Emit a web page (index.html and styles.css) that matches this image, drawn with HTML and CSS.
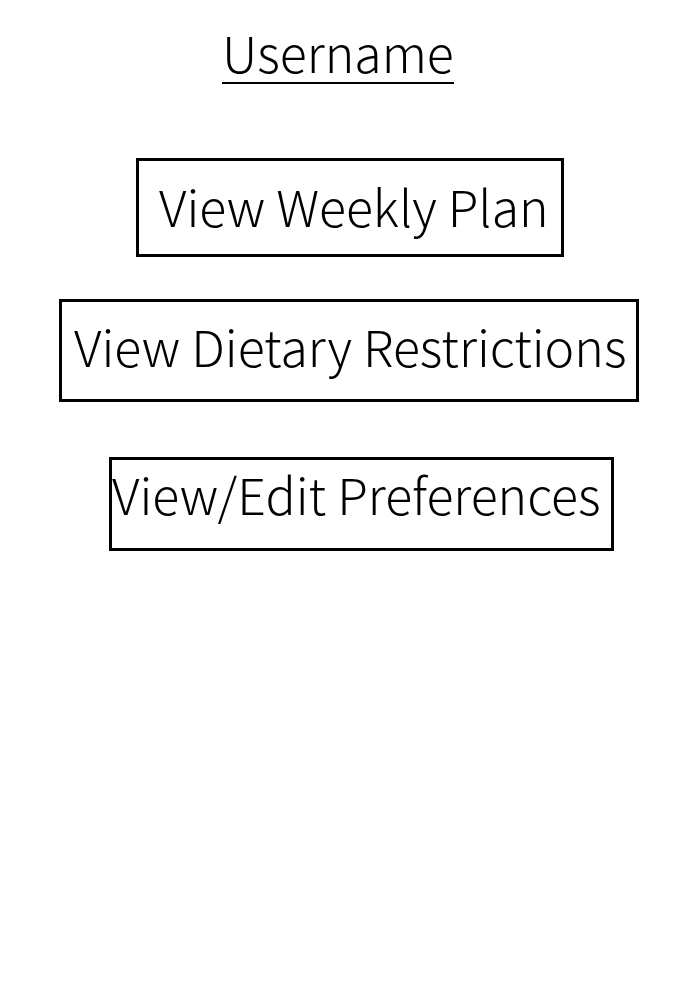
FILE: index.html
```html
<!DOCTYPE html>
<html>
<head>
<meta charset="utf-8">
<link rel="stylesheet" href="styles.css">
</head>
<body>
<main class="page">
  <h1 class="username">Username</h1>
  <div class="btn btn-weekly">View Weekly Plan</div>
  <div class="btn btn-diet">View Dietary Restrictions</div>
  <div class="btn btn-prefs">View/Edit Preferences</div>
</main>
</body>
</html>
```

FILE: styles.css
```css
html, body {
  margin: 0;
  padding: 0;
  background: #fff;
}
.page {
  width: 700px;
  display: flex;
  flex-direction: column;
  align-items: flex-start;
  font-family: "Noto Sans CJK JP", "Noto Sans", sans-serif;
  font-weight: 300;
  color: #000;
}
.username {
  margin: 26px 0 0 222px;
  font-size: 50px;
  font-weight: 300;
  line-height: 50px;
  border-bottom: 2px solid #000;
  padding-bottom: 6px;
}
.btn {
  box-sizing: border-box;
  border: 3px solid #000;
  font-size: 50px;
  display: flex;
  align-items: center;
  white-space: nowrap;
}
.btn-weekly {
  margin: 74px 0 0 136px;
  width: 428px;
  height: 99px;
  padding-left: 20px;
  padding-bottom: 6px;
}
.btn-diet {
  margin: 42px 0 0 59px;
  width: 580px;
  height: 103px;
  padding-left: 12px;
  padding-bottom: 12px;
}
.btn-prefs {
  margin: 55px 0 0 109px;
  width: 505px;
  height: 94px;
  padding-left: 0;
  padding-bottom: 22px;
}
```
